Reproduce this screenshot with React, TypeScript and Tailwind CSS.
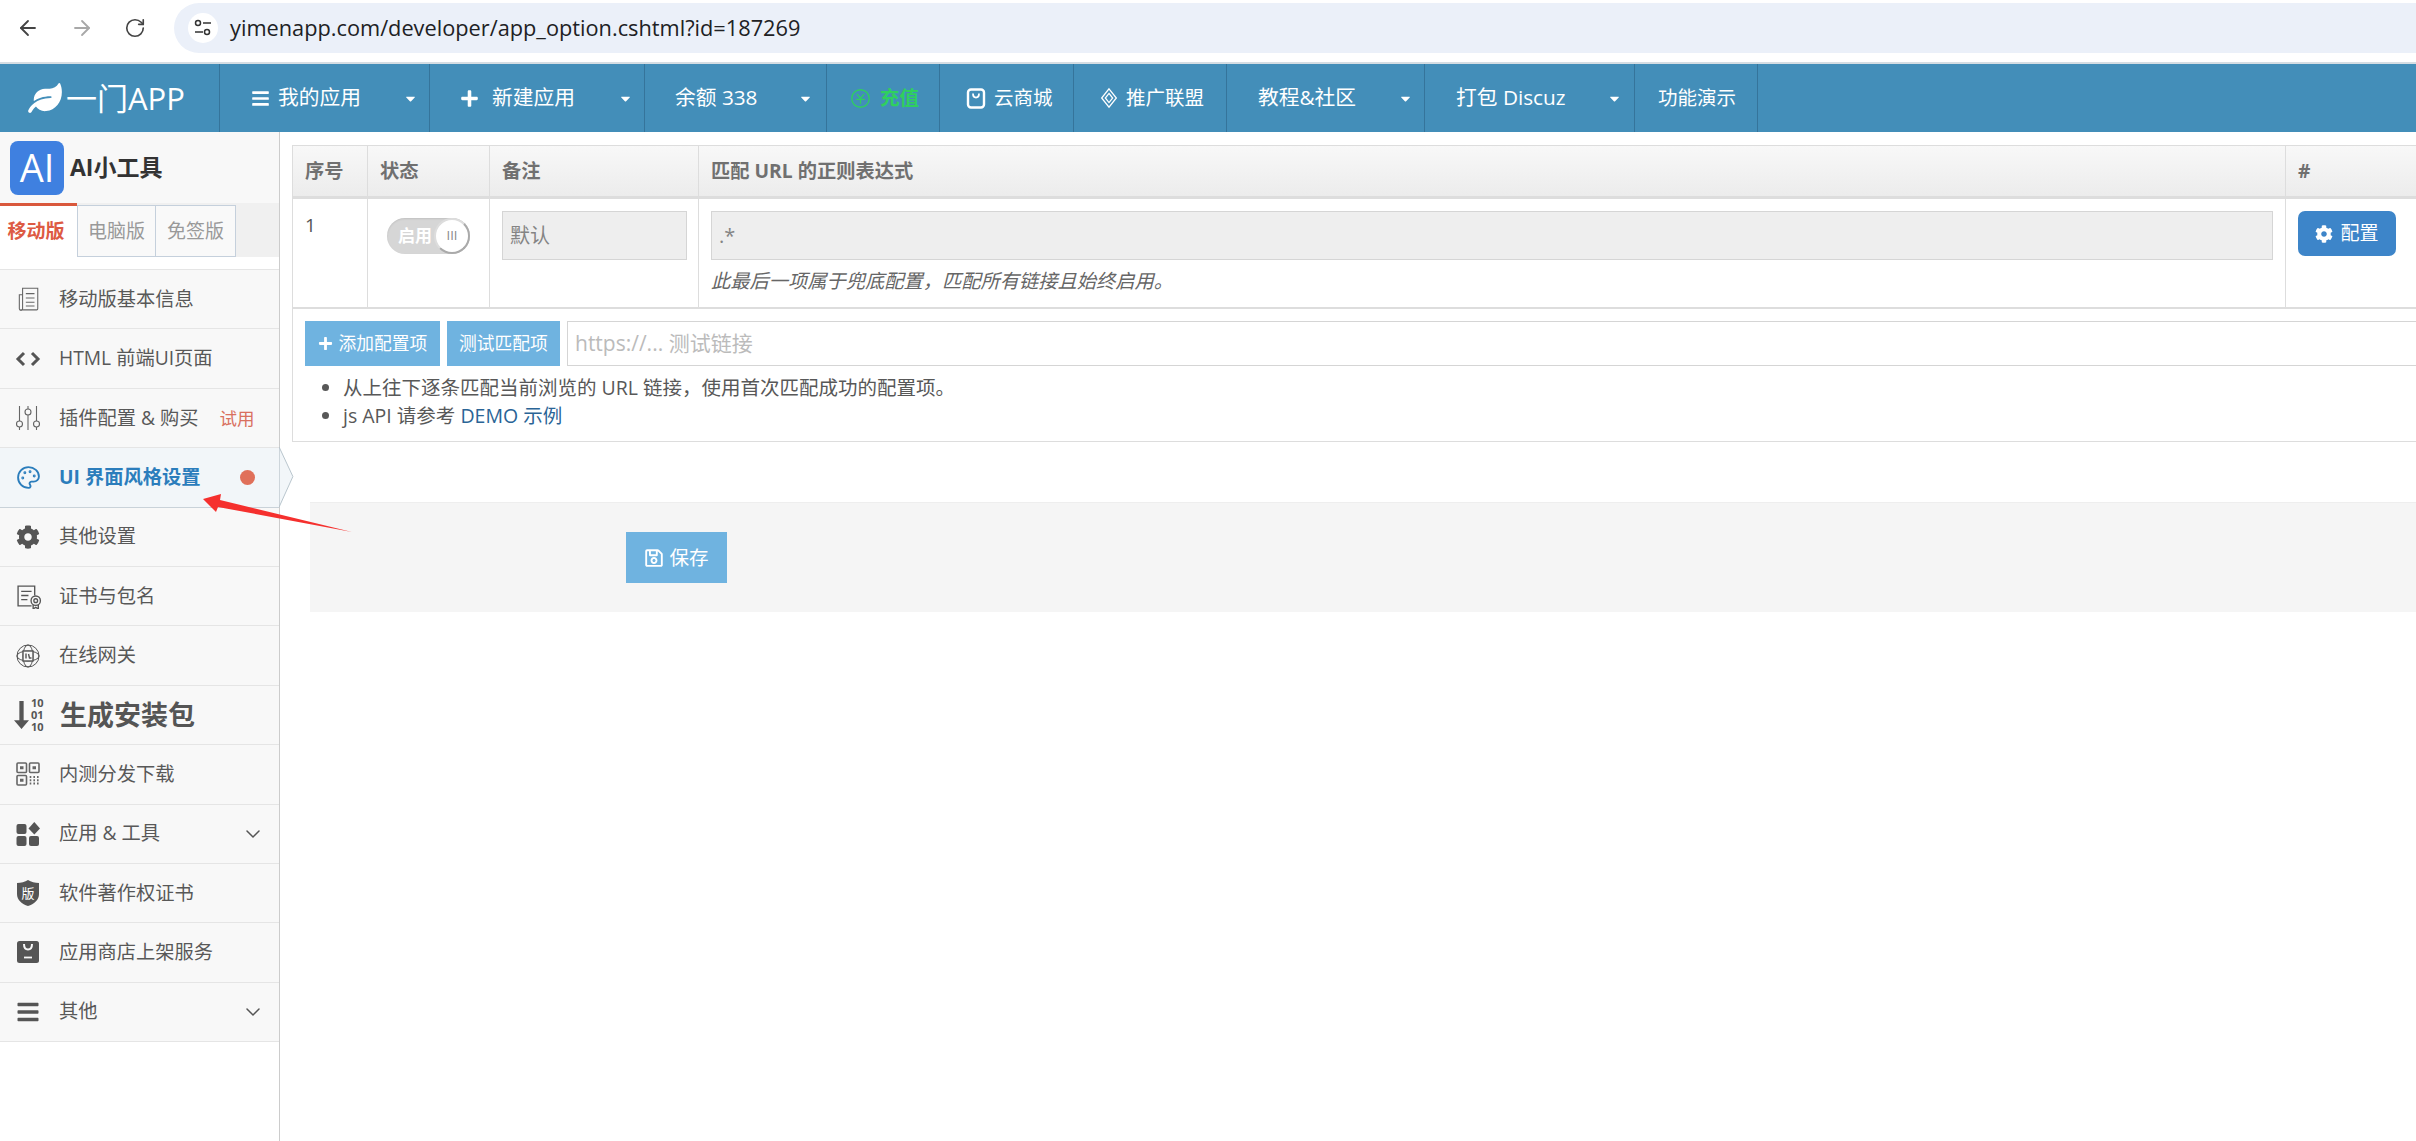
import { ArrowLeft, ArrowRight, ChevronDown, Palette, RotateCw } from "lucide-react";
import { FaBars, FaCaretDown, FaCog, FaLeaf, FaPlus, FaRegSave } from "react-icons/fa";
import React from "react";

const NAV_ITEMS = [
  { w: "w-[210px]", pl: "pl-[31px]", size: "text-[20.750px]", label: "我的应用", icon: "bars", caret: "ml-[43px]" },
  { w: "w-[215px]", pl: "pl-[30px]", size: "text-[20.750px]", label: "新建应用", icon: "plus", caret: "ml-[44px]" },
  { w: "w-[182px]", pl: "pl-[30px]", size: "text-[20.750px]", label: "余额 338", caret: "ml-[42px]" },
  { w: "w-[113px]", pl: "pl-[23px]", size: "text-[19.500px]", label: "充值", icon: "charge" },
  { w: "w-[134px]", pl: "pl-[24px]", size: "text-[19.500px]", label: "云商城", icon: "bag" },
  { w: "w-[153px]", pl: "pl-[24px]", size: "text-[19.500px]", label: "推广联盟", icon: "diamond" },
  { w: "w-[198px]", pl: "pl-[31px]", size: "text-[20.750px]", label: "教程&社区", caret: "ml-[43px]" },
  { w: "w-[210px]", pl: "pl-[31px]", size: "text-[20.750px]", label: "打包 Discuz", caret: "ml-[43px]" },
  { w: "w-[123px]", pl: "pl-[23px]", size: "text-[19.500px]", label: "功能演示" },
];

function NavIcon({ name }: { name?: string }) {
  if (name === "bars") return <FaBars className="mr-[8px] h-[19px] w-[19px]" />;
  if (name === "plus") return <FaPlus className="mr-[13px] h-[19px] w-[19px]" />;
  if (name === "charge")
    return (
      <svg viewBox="0 0 24 24" className="mr-[9px] h-[21px] w-[21px] text-[#2fd05e]" fill="none" stroke="currentColor" strokeWidth="1.5">
        <circle cx="12" cy="12" r="10" />
        <path d="M8 7l4 5 4-5M7 13h10M12 12v6" />
      </svg>
    );
  if (name === "bag")
    return (
      <svg viewBox="0 0 24 24" className="mr-[6px] h-[25px] w-[24px]" fill="none" stroke="currentColor" strokeWidth="2.4">
        <rect x="4" y="3" width="16" height="18" rx="3" />
        <path d="M9 7c0 3 1.5 4 3 4s3-1 3-4" strokeWidth="1.8" />
      </svg>
    );
  if (name === "diamond")
    return (
      <svg viewBox="0 0 24 24" className="mr-[6px] h-[24px] w-[22px]" fill="none" stroke="currentColor" strokeWidth="1.4">
        <path d="M12 2l8 10-8 10-8-10z" />
        <path d="M12 7l4 5-4 5-4-5z" />
      </svg>
    );
  return null;
}

function NavItem({ item }: { item: (typeof NAV_ITEMS)[number] }) {
  const color = item.label === "充值" ? "text-[#2fd05e] font-bold" : "text-white";
  return (
    <div className={`flex h-full items-center border-r border-[#35749b] ${item.w} ${item.pl} ${color}`}>
      <NavIcon name={item.icon} />
      <span className={`whitespace-nowrap ${item.size}`}>{item.label}</span>
      {item.caret && <FaCaretDown className={`h-[15px] w-[13px] text-white ${item.caret}`} />}
    </div>
  );
}

function DocIcon() {
  return (
    <svg viewBox="0 0 24 24" className="h-[26px] w-[26px] -ml-[1px]" fill="none" stroke="#666" strokeWidth="1">
      <path d="M5 22h15a1 1 0 0 0 1-1V2H7v19a1.5 1.5 0 0 1-3 0V8h3" />
      <path d="M10 7h8M10 11h8M10 15h8M10 18.500h8" />
    </svg>
  );
}

function CodeIcon() {
  return (
    <svg viewBox="0 0 26 16" className="h-[16px] w-[26px] -ml-[1px]" fill="none" stroke="#555" strokeWidth="3">
      <path d="M9 2L3 8l6 6M17 2l6 6-6 6" />
    </svg>
  );
}

function SlidersIcon() {
  return (
    <svg viewBox="0 0 24 26" className="h-[26px] w-[24px]" fill="none" stroke="#666" strokeWidth="1.100">
      <path d="M3.500 1v15M3.500 22v3M12 1v3M12 10v15M20.500 1v15M20.500 22v3" />
      <circle cx="3.500" cy="19" r="3" />
      <circle cx="12" cy="7" r="3" />
      <circle cx="20.500" cy="19" r="3" />
    </svg>
  );
}

function CertIcon() {
  return (
    <svg viewBox="0 0 26 24" className="h-[25px] w-[27px]" fill="none" stroke="#555" strokeWidth="1.300">
      <path d="M15 21H2V2h16v9" />
      <path d="M5 7h10M5 11h7M5 15h6" />
      <circle cx="19" cy="16" r="4.500" />
      <circle cx="19" cy="16" r="1.800" />
      <path d="M16.500 20v4l2.500-1.500 2.500 1.500v-4" />
    </svg>
  );
}

function GlobeIcon() {
  return (
    <svg viewBox="0 0 24 24" className="h-[24px] w-[24px]" fill="none" stroke="#555" strokeWidth="1">
      <circle cx="12" cy="12" r="11" />
      <ellipse cx="12" cy="12" rx="11" ry="5" />
      <ellipse cx="12" cy="12" rx="5" ry="11" />
      <rect x="7" y="7" width="10" height="10" fill="#f8f8f8" strokeWidth="1.400" />
      <path d="M10 9.500v5M12.500 10l1 4h2" strokeWidth="1.400" />
    </svg>
  );
}

function SortIcon() {
  return (
    <div className="flex w-[30px] items-center -ml-[2px]">
      <svg viewBox="0 0 14 26" className="h-[36px] w-[15px]" fill="#555">
        <path d="M5 0h4v18h5l-7 8-7-8h5z" />
      </svg>
      <div className="ml-[2px] flex flex-col text-[11px] font-bold leading-[12px] text-[#555]">
        <span>10</span>
        <span>01</span>
        <span>10</span>
      </div>
    </div>
  );
}

function QrIcon() {
  return (
    <svg viewBox="0 0 24 24" className="h-[24px] w-[24px]" fill="none" stroke="#666" strokeWidth="1.600">
      <rect x="1" y="1" width="9.500" height="9.500" rx="1" />
      <rect x="13.500" y="1" width="9.500" height="9.500" rx="1" />
      <rect x="1" y="13.500" width="9.500" height="9.500" rx="1" />
      <path d="M4 5.700h3.500M16.500 5.700H20M4 18.200h3.500" strokeWidth="3" />
      <path d="M14.500 14v9M18.200 14v9M21.800 14v9" strokeDasharray="2 1.200" />
    </svg>
  );
}

function AppsIcon() {
  return (
    <svg viewBox="0 0 24 24" className="h-[24px] w-[24px]" fill="#555">
      <rect x="0.500" y="2" width="10" height="10" rx="2" />
      <rect x="0.500" y="14" width="10" height="10" rx="2" />
      <rect x="13" y="14" width="10" height="10" rx="2" />
      <path d="M18.300 0l5.700 6.500-5.700 6-5.800-6z" />
    </svg>
  );
}

function ShieldIcon() {
  return (
    <div className="relative flex h-[26px] w-[24px] items-center justify-center">
      <svg viewBox="0 0 24 26" className="absolute inset-0 h-[26px] w-[24px]" fill="#555">
        <path d="M12 0c3 2 7 3 11 3v11c0 6-5 10-11 12C6 24 1 20 1 14V3c4 0 8-1 11-3z" />
      </svg>
      <span className="relative text-[13px] leading-none text-white">版</span>
    </div>
  );
}

function StoreIcon() {
  return (
    <svg viewBox="0 0 24 24" className="h-[24px] w-[24px]">
      <rect x="1" y="1" width="22" height="22" rx="2.500" fill="#555" />
      <path d="M8 4c0 4 1.500 5.500 4 5.500S16 8 16 4" fill="none" stroke="#f8f8f8" strokeWidth="2" />
      <path d="M8 17.500h8" stroke="#f8f8f8" strokeWidth="1.800" />
    </svg>
  );
}

function SideIcon({ name }: { name: string }) {
  if (name === "doc") return <DocIcon />;
  if (name === "code") return <CodeIcon />;
  if (name === "sliders") return <SlidersIcon />;
  if (name === "palette") return <Palette className="h-[25px] w-[25px] text-[#2b7dbc]" strokeWidth={1.800} />;
  if (name === "cog") return <FaCog className="h-[24px] w-[24px] text-[#555]" />;
  if (name === "cert") return <CertIcon />;
  if (name === "globe") return <GlobeIcon />;
  if (name === "sort") return <SortIcon />;
  if (name === "qr") return <QrIcon />;
  if (name === "apps") return <AppsIcon />;
  if (name === "shield") return <ShieldIcon />;
  if (name === "store") return <StoreIcon />;
  return <FaBars className="h-[24px] w-[24px] text-[#555]" />;
}

const MENU = [
  { icon: "doc", label: "移动版基本信息" },
  { icon: "code", label: "HTML 前端UI页面" },
  { icon: "sliders", label: "插件配置 & 购买", trial: true },
  { icon: "palette", label: "UI 界面风格设置", active: true },
  { icon: "cog", label: "其他设置" },
  { icon: "cert", label: "证书与包名" },
  { icon: "globe", label: "在线网关" },
  { icon: "sort", label: "生成安装包", big: true },
  { icon: "qr", label: "内测分发下载" },
  { icon: "apps", label: "应用 & 工具", more: true },
  { icon: "shield", label: "软件著作权证书" },
  { icon: "store", label: "应用商店上架服务" },
  { icon: "bars", label: "其他", more: true },
];

function MenuRow({ item }: { item: (typeof MENU)[number] }) {
  const bg = item.active ? "bg-[#f2f6f9]" : "bg-[#f8f8f8]";
  const border = item.active ? "border-[#c9d2d9]" : "border-[#e5e5e5]";
  return (
    <div className={`relative flex h-[59.400px] items-center border-b pl-[16px] ${bg} ${border}`}>
      <div className="flex w-[43px] shrink-0 items-center">
        <SideIcon name={item.icon} />
      </div>
      {item.big ? (
        <span className="ml-[1px] text-[27px] font-bold text-[#555]">{item.label}</span>
      ) : (
        <span className={`whitespace-nowrap text-[19.250px] ${item.active ? "font-bold text-[#2b7dbc]" : "text-[#585858]"}`}>
          {item.label}
        </span>
      )}
      {item.trial && <span className="ml-[21px] text-[17.500px] text-[#d9705f]">试用</span>}
      {item.active && <span className="ml-[40px] h-[15px] w-[15px] rounded-full bg-[#e0705a]" />}
      {item.more && <ChevronDown className="absolute right-[14px] h-[24px] w-[24px] text-[#555]" strokeWidth={1.500} />}
      {item.active && (
        <svg viewBox="0 0 15 62" className="absolute left-[279px] top-[-1px] z-10 h-[61px] w-[15px]">
          <path d="M0 0l14 30L0 61z" fill="#f2f6f9" stroke="#b8c4cc" strokeWidth="1" />
        </svg>
      )}
    </div>
  );
}

function Sidebar() {
  return (
    <aside className="flex w-[280px] shrink-0 flex-col border-r border-[#cccccc]">
      <div className="flex h-[71px] items-center gap-[6px] bg-[#f8f8f8] pl-[10px]">
        <div className="flex h-[54px] w-[54px] items-center justify-center rounded-[8px] bg-[#3f80e0] text-[38px] text-white">
          AI
        </div>
        <span className="text-[23px] font-bold text-[#333]">AI小工具</span>
      </div>
      <div className="flex h-[54px] bg-[#f0f0f0] text-[19px]">
        <div className="flex w-[77px] items-center justify-center border-t-[3px] border-[#d9583c] bg-white pr-[5px] font-bold text-[#dd5a43]">
          移动版
        </div>
        <div className="mt-[2px] flex w-[79px] items-center justify-center border border-[#c5d0dc] bg-[#f9f9f9] text-[#999]">
          电脑版
        </div>
        <div className="-ml-px mt-[2px] flex w-[81px] items-center justify-center border border-[#c5d0dc] bg-[#f9f9f9] text-[#999]">
          免签版
        </div>
      </div>
      <div className="h-[13px] border-b border-[#e5e5e5] bg-white" />
      {MENU.map((item) => (
        <MenuRow key={item.label} item={item} />
      ))}
    </aside>
  );
}

function RuleTable() {
  return (
    <section className="ml-[12px] mt-[13px] border-b border-l border-[#dddddd] text-[#555]">
      <div className="flex h-[54px] items-center border-b-[3px] border-t border-[#dddddd] bg-gradient-to-b from-[#f8f8f8] to-[#ececec] text-[19.250px] font-bold text-[#707070]">
        <div className="flex h-full w-[75px] items-center border-r border-[#dddddd] pl-[12px]">序号</div>
        <div className="flex h-full w-[122px] items-center border-r border-[#dddddd] pl-[12px]">状态</div>
        <div className="flex h-full w-[209px] items-center border-r border-[#dddddd] pl-[12px]">备注</div>
        <div className="flex h-full w-[1587px] items-center border-r border-[#dddddd] pl-[12px]">匹配 URL 的正则表达式</div>
        <div className="flex h-full flex-1 items-center pl-[12px]">#</div>
      </div>
      <div className="flex h-[110px] border-b-[2px] border-[#dddddd]">
        <div className="w-[75px] border-r border-[#dddddd] pl-[12px] pt-[12px] text-[19px]">1</div>
        <div className="w-[122px] border-r border-[#dddddd] pl-[19px] pt-[19px]">
          <div className="flex h-[36px] w-[83px] items-center justify-between rounded-full bg-[#d6d6d6] pl-[11px] shadow-[inset_0_1px_2px_rgba(0,0,0,0.1)]">
            <span className="text-[17px] font-bold text-white">启用</span>
            <div className="flex h-[36px] w-[36px] items-center justify-center rounded-full border-2 border-[#aaaaaa] border-l-[#dddddd] border-t-[#dddddd] bg-white text-[13px] text-[#888]">
              III
            </div>
          </div>
        </div>
        <div className="w-[209px] border-r border-[#dddddd] pl-[12px] pt-[12px]">
          <div className="flex h-[49px] w-[185px] items-center border border-[#d5d5d5] bg-[#eeeeee] pl-[7px] text-[20px] text-[#848484]">
            默认
          </div>
        </div>
        <div className="w-[1587px] border-r border-[#dddddd] pl-[12px] pt-[12px]">
          <div className="flex h-[49px] w-[1562px] items-center border border-[#d5d5d5] bg-[#eeeeee] pl-[7px] text-[20px] text-[#848484]">
            .*
          </div>
          <p className="mt-[11px] text-[19.250px] italic leading-[20px] text-[#666]">
            此最后一项属于兜底配置，匹配所有链接且始终启用。
          </p>
        </div>
        <div className="flex-1 pl-[12px] pt-[12px]">
          <button className="flex h-[45px] w-[98px] items-center justify-center gap-[7px] rounded-[7px] bg-[#3d85c9] text-[19px] text-white">
            <FaCog className="h-[18px] w-[18px]" />
            配置
          </button>
        </div>
      </div>
      <div className="flex gap-[7px] pl-[12px] pt-[12px]">
        <button className="flex h-[45px] w-[135px] items-center justify-center gap-[6px] bg-[#6fb3e0] text-[17.750px] text-white">
          <FaPlus className="h-[15px] w-[15px]" />
          添加配置项
        </button>
        <button className="h-[45px] w-[113px] bg-[#6fb3e0] text-[17.750px] text-white">测试匹配项</button>
        <div className="flex h-[45px] flex-1 items-center border border-r-0 border-[#d5d5d5] pl-[7px] text-[21px] text-[#bbbbbb]">
          https://... 测试链接
        </div>
      </div>
      <ul className="list-disc pb-[11px] pl-[50px] pt-[8px] text-[19.500px] leading-[28px] text-[#585858]">
        <li>从上往下逐条匹配当前浏览的 URL 链接，使用首次匹配成功的配置项。</li>
        <li>
          js API 请参考 <span className="text-[#2a6496]">DEMO 示例</span>
        </li>
      </ul>
    </section>
  );
}

function SaveBar() {
  return (
    <div className="ml-[30px] mt-[60px] flex h-[110px] items-center border-t border-[#eeeeee] bg-[#f5f5f5] pl-[316px]">
      <button className="flex h-[51px] w-[101px] items-center justify-center gap-[5px] bg-[#6fb3e0] text-[19.500px] text-white">
        <FaRegSave className="h-[20px] w-[20px]" />
        保存
      </button>
    </div>
  );
}

export default function App() {
  return (
    <div className="relative flex h-[1141px] w-[2416px] flex-col overflow-hidden bg-white font-['Open_Sans','Noto_Sans_CJK_SC',sans-serif]">
      {/* browser bar */}
      <div className="flex h-[64px] shrink-0 items-center border-b-[2px] border-[#d5dde3] pb-[8px] pt-[2px]">
        <ArrowLeft className="ml-[16px] h-[24px] w-[24px] text-[#444]" strokeWidth={1.800} />
        <ArrowRight className="ml-[30px] h-[24px] w-[24px] text-[#a8a8a8]" strokeWidth={1.800} />
        <RotateCw className="ml-[30px] h-[22px] w-[22px] text-[#444]" strokeWidth={1.800} />
        <div className="ml-[28px] flex h-[50px] flex-1 items-center rounded-l-full bg-[#ebf0f9] pl-[14px]">
          <div className="flex h-[30px] w-[30px] items-center justify-center rounded-full bg-white">
            <svg viewBox="0 0 20 20" className="h-[20px] w-[20px]" fill="none" stroke="#333" strokeWidth="1.500">
              <circle cx="5" cy="5" r="2.500" />
              <circle cx="14" cy="14" r="2.500" />
              <path d="M10 5h8M2 14h8" />
            </svg>
          </div>
          <span className="ml-[12px] text-[21.750px] text-[#202124]">yimenapp.com/developer/app_option.cshtml?id=187269</span>
        </div>
      </div>

      {/* app navbar */}
      <header className="flex h-[68px] shrink-0 items-center bg-[#438eb9]">
        <div className="flex h-full w-[220px] items-center border-r border-[#35749b] pl-[28px] text-white">
          <FaLeaf className="h-[30px] w-[34px]" />
          <span className="ml-[4px] text-[31px]">一门APP</span>
        </div>
        {NAV_ITEMS.map((item) => (
          <NavItem key={item.label} item={item} />
        ))}
      </header>

      <div className="flex flex-1">
        <Sidebar />
        <main className="flex-1">
          <RuleTable />
          <SaveBar />
        </main>
      </div>

      {/* red arrow drawn over the screenshot */}
      <svg viewBox="0 0 160 50" className="pointer-events-none absolute left-[200px] top-[490px] z-20 h-[50px] w-[160px]">
        <path d="M3 9L21 4l-1 6 132 32-134-25-2 5z" fill="#f5302e" />
      </svg>
    </div>
  );
}
